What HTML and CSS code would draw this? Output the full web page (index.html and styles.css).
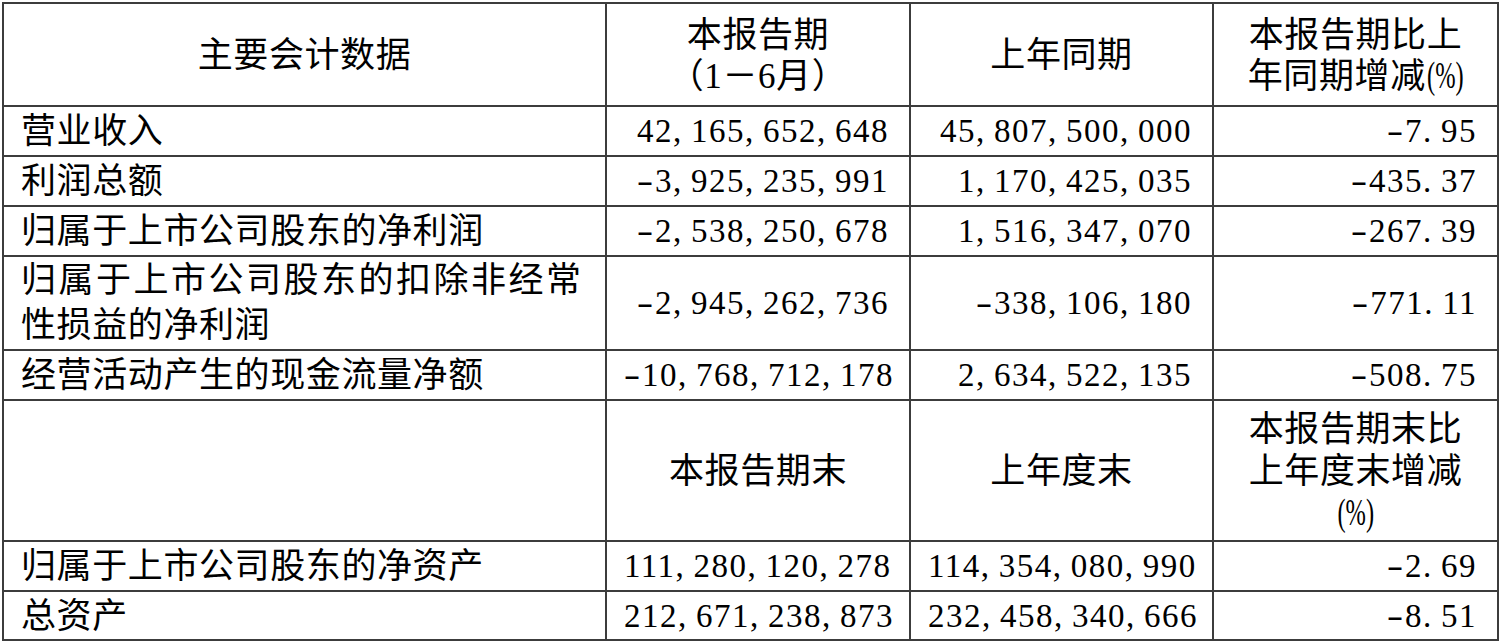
FILE: index.html
```html
<!DOCTYPE html>
<html lang="zh-CN">
<head>
<meta charset="utf-8">
<title>主要会计数据</title>
<link rel="stylesheet" href="styles.css">
</head>
<body>
<table class="fin">
  <colgroup>
    <col class="col1"><col class="col2"><col class="col3"><col class="col4">
  </colgroup>
  <tr class="r-head">
    <td class="ctr">主要会计数据</td>
    <td class="ctr two">本报告期<br>（1－6月）</td>
    <td class="ctr">上年同期</td>
    <td class="ctr two">本报告期比上<br>年同期增减<span class="pct">(%)</span></td>
  </tr>
  <tr class="r-a">
    <td class="lbl">营业收入</td>
    <td class="num">42<span class="p">,</span>165<span class="p">,</span>652<span class="p">,</span>648</td>
    <td class="num">45<span class="p">,</span>807<span class="p">,</span>500<span class="p">,</span>000</td>
    <td class="num"><span class="m">-</span>7<span class="p">.</span>95</td>
  </tr>
  <tr class="r-b">
    <td class="lbl">利润总额</td>
    <td class="num"><span class="m">-</span>3<span class="p">,</span>925<span class="p">,</span>235<span class="p">,</span>991</td>
    <td class="num">1<span class="p">,</span>170<span class="p">,</span>425<span class="p">,</span>035</td>
    <td class="num"><span class="m">-</span>435<span class="p">.</span>37</td>
  </tr>
  <tr class="r-a">
    <td class="lbl">归属于上市公司股东的净利润</td>
    <td class="num"><span class="m">-</span>2<span class="p">,</span>538<span class="p">,</span>250<span class="p">,</span>678</td>
    <td class="num">1<span class="p">,</span>516<span class="p">,</span>347<span class="p">,</span>070</td>
    <td class="num"><span class="m">-</span>267<span class="p">.</span>39</td>
  </tr>
  <tr class="r-two">
    <td class="lbl tall"><span class="spread">归属于上市公司股东的扣除非经常</span><br>性损益的净利润</td>
    <td class="num"><span class="m">-</span>2<span class="p">,</span>945<span class="p">,</span>262<span class="p">,</span>736</td>
    <td class="num"><span class="m">-</span>338<span class="p">,</span>106<span class="p">,</span>180</td>
    <td class="num"><span class="m">-</span>771<span class="p">.</span>11</td>
  </tr>
  <tr class="r-b">
    <td class="lbl">经营活动产生的现金流量净额</td>
    <td class="num"><span class="m">-</span>10<span class="p">,</span>768<span class="p">,</span>712<span class="p">,</span>178</td>
    <td class="num">2<span class="p">,</span>634<span class="p">,</span>522<span class="p">,</span>135</td>
    <td class="num"><span class="m">-</span>508<span class="p">.</span>75</td>
  </tr>
  <tr class="r-head2">
    <td class="lbl"></td>
    <td class="ctr">本报告期末</td>
    <td class="ctr">上年度末</td>
    <td class="ctr three">本报告期末比<br>上年度末增减<br><span class="pct">(%)</span></td>
  </tr>
  <tr class="r-a">
    <td class="lbl">归属于上市公司股东的净资产</td>
    <td class="num">111<span class="p">,</span>280<span class="p">,</span>120<span class="p">,</span>278</td>
    <td class="num">114<span class="p">,</span>354<span class="p">,</span>080<span class="p">,</span>990</td>
    <td class="num"><span class="m">-</span>2<span class="p">.</span>69</td>
  </tr>
  <tr class="r-c">
    <td class="lbl">总资产</td>
    <td class="num">212<span class="p">,</span>671<span class="p">,</span>238<span class="p">,</span>873</td>
    <td class="num">232<span class="p">,</span>458<span class="p">,</span>340<span class="p">,</span>666</td>
    <td class="num"><span class="m">-</span>8<span class="p">.</span>51</td>
  </tr>
</table>
</body>
</html>
```

FILE: styles.css
```css
html, body {
  margin: 0;
  padding: 0;
  background: #ffffff;
}

body {
  padding: 2px 0 0 2px;
  color: #000000;
  font-family: "Liberation Serif", "Noto Sans CJK SC", serif;
}

.fin {
  border-collapse: collapse;
  table-layout: fixed;
  width: 1497px;
  font-size: 35px;
  letter-spacing: 0.6px;
}

.col1 { width: 603px; }
.col2 { width: 304px; }
.col3 { width: 303px; }
.col4 { width: 285px; }

.fin td {
  border: 2px solid #3c3c3c;
  vertical-align: middle;
  padding: 2px 20px 0 17px;
  line-height: 42px;
  white-space: nowrap;
}

.r-head { height: 103px; }
.r-a { height: 50px; }
.r-b { height: 50px; }
.r-two { height: 94px; }
.r-head2 { height: 141px; }
.r-c { height: 49px; }

.fin td.ctr {
  text-align: center;
  padding: 2px 4px 0 4px;
}

.fin td.two { line-height: 41px; }
.fin td.three { line-height: 42px; }

.fin td.tall {
  line-height: 45px;
  padding-top: 0;
}

.spread { letter-spacing: 2.5px; }

.fin td.num {
  text-align: right;
  font-family: "Liberation Serif", "Times New Roman", serif;
  font-size: 33px;
  letter-spacing: 1.5px;
  padding-top: 0;
}

.p {
  display: inline-block;
  width: 18px;
  text-align: left;
}

.m {
  display: inline-block;
  width: 18px;
  text-align: center;
  transform: scaleX(1.5);
}

.pct {
  display: inline-block;
  font-family: "Liberation Serif", "Times New Roman", serif;
  font-size: 37px;
  letter-spacing: 0;
  line-height: 37px;
  transform: scaleX(0.66);
  transform-origin: left center;
  margin-right: -19px;
  margin-left: 1px;
}

.three .pct {
  transform-origin: center center;
  margin-left: -9px;
  margin-right: -9px;
}
```
